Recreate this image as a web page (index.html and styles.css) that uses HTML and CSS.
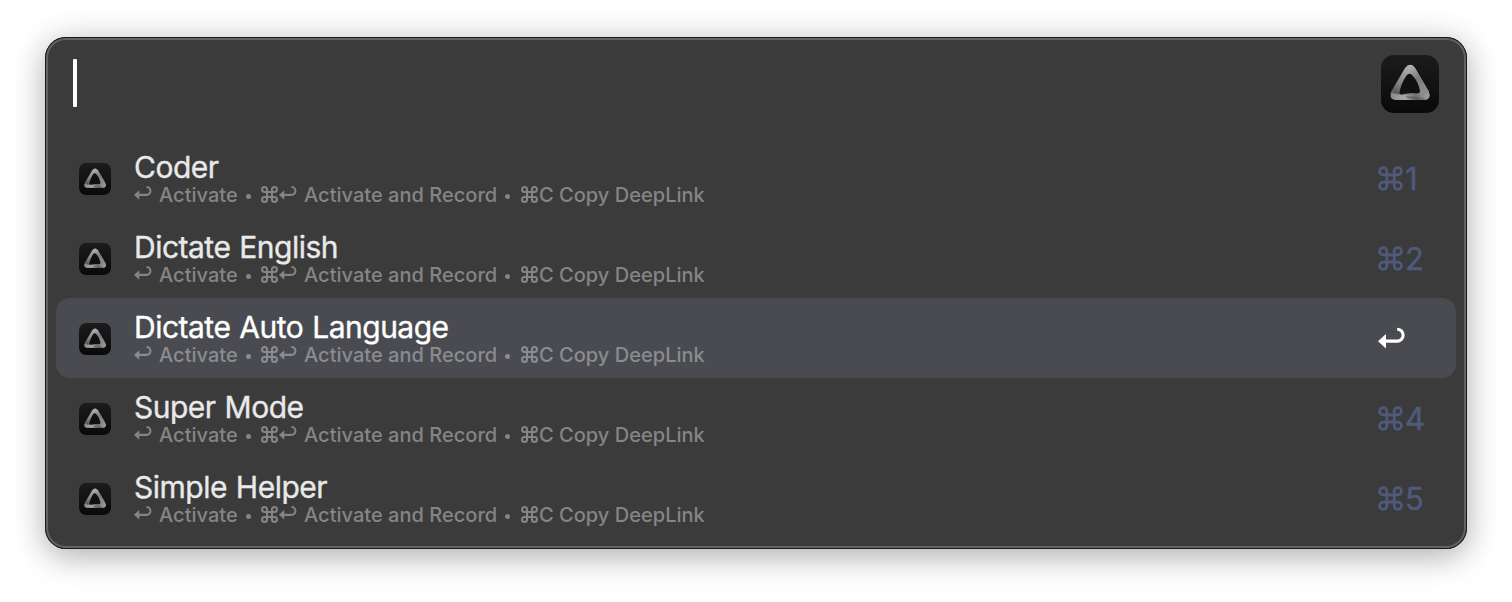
FILE: index.html
```html
<!DOCTYPE html>
<html lang="en">
<head>
<meta charset="utf-8">
<title>Launcher</title>
<link rel="stylesheet" href="styles.css">
</head>
<body>
<svg class="defs" aria-hidden="true">
  <defs>
    <linearGradient id="tile" x1="0" y1="0" x2="0" y2="1"><stop offset="0" stop-color="#1b1b1b"/><stop offset=".5" stop-color="#131313"/><stop offset="1" stop-color="#090909"/></linearGradient>
    <linearGradient id="left" gradientUnits="userSpaceOnUse" x1="29" y1="10" x2="12" y2="44"><stop offset="0" stop-color="#b4b4b4"/><stop offset=".55" stop-color="#848484"/><stop offset=".8" stop-color="#5c5c5c"/><stop offset="1" stop-color="#909090"/></linearGradient>
    <linearGradient id="right" gradientUnits="userSpaceOnUse" x1="29" y1="10" x2="46" y2="44"><stop offset="0" stop-color="#b4b4b4"/><stop offset=".4" stop-color="#7c7c7c"/><stop offset="1" stop-color="#959595"/></linearGradient>
    <linearGradient id="base" gradientUnits="userSpaceOnUse" x1="10" y1="0" x2="48" y2="0"><stop offset="0" stop-color="#8c8c8c"/><stop offset=".35" stop-color="#a8a8a8"/><stop offset=".65" stop-color="#707070"/><stop offset="1" stop-color="#a0a0a0"/></linearGradient>
    <symbol id="logo" viewBox="0 0 58 58">
      <rect width="58" height="58" rx="13" fill="url(#tile)"/>
      <path d="M24 13Q29 6.500 34 13L47.500 36Q51 45 42 45H16Q7 45 10.500 36Z" fill="url(#left)"/>
      <path d="M29 9.800Q32 9.800 34 13L47.500 36Q51 45 42 45L36 39L29 20Z" fill="url(#right)"/>
      <path d="M10 38Q16 40 24 39.500Q34 39 48.500 39Q48 45 42 45H16Q10 45 10 38Z" fill="url(#base)"/>
      <path d="M24 41Q35 41 45 44Q42 45 36 45Q28 44 24 41Z" fill="#555" opacity=".6"/>
      <path d="M25.500 20.500Q28.500 17 31.500 20.500Q37.500 27 39 36Q39 38.500 36 38.500Q28 37 20.500 39.500Q17.500 39.500 19 35Q20.500 28 25.500 20.500Z" fill="#101010"/>
    </symbol>
    <symbol id="cmd" viewBox="0 0 24 24"><path d="M15.500 8.500V5a3.500 3.500 0 1 1 3.500 3.500H5A3.500 3.500 0 1 1 8.500 5v14A3.500 3.500 0 1 1 5 15.500h14A3.500 3.500 0 1 1 15.500 19Z" fill="none" stroke="currentColor"/></symbol>
    <symbol id="ret" viewBox="0 0 28 22"><path d="M7 14.500H18.500A5.750 5.750 0 0 0 18.500 3" fill="none" stroke="currentColor" stroke-width="3"/><path d="M0 14.500 7.700 7.500V21.500Z" fill="currentColor"/></symbol>
  </defs>
</svg>
<main class="panel">
  <header class="search">
    <span class="caret"></span>
    <svg class="app-logo"><use href="#logo"/></svg>
  </header>
  <ul class="results" id="results"></ul>
</main>
<script src="results.js"></script>
</body>
</html>
```

FILE: styles.css
```css
* { box-sizing: border-box; }
body {
  margin: 0;
  width: 1512px;
  height: 602px;
  padding: 37px 45px 53px;
  overflow: hidden;
  background: #fff;
  font-family: Inter, "Liberation Sans", sans-serif;
}
.defs { position: absolute; width: 0; height: 0; }
.panel {
  height: 512px;
  padding: 1px 11px;
  border-radius: 21px;
  background: #3b3b3b;
  box-shadow: inset 0 0 0 1px #191919, inset 0 0 0 3px #636363, 0 8px 32px rgba(0, 0, 0, .28), 0 0 36px rgba(0, 0, 0, .07);
}
.search {
  display: flex;
  justify-content: space-between;
  height: 100px;
  padding: 17px 17px 0;
}
.caret { width: 4px; height: 48px; margin-top: 4px; border-radius: 1px; background: #fff; }
.app-logo { width: 58px; height: 58px; }
.results { margin: 0; padding: 0; list-style: none; }
.row {
  display: flex;
  align-items: center;
  height: 80px;
  padding: 0 32px 0 23px;
  border-radius: 14px;
  color: #e9e9e9;
}
.row.selected { background: #494b50; color: #fff; }
.row-logo { width: 32px; height: 32px; margin-top: 2px; }
.copy { flex: 1; margin-left: 23px; }
.title {
  height: 32px;
  padding-top: 1px;
  font-size: 30px;
  line-height: 32px;
  letter-spacing: -.5px;
  word-spacing: 1px;
  -webkit-text-stroke: .35px currentColor;
  white-space: nowrap;
}
.subtitle {
  display: grid;
  grid-template-columns: 25px 87px 14px 19px 25px 201px 15px 39px 150px;
  align-items: center;
  height: 24px;
  padding-top: 2px;
  color: #858585;
  font-size: 20px;
  line-height: 22px;
  font-weight: 500;
  white-space: nowrap;
}
.selected .subtitle { color: #8b8c8f; }
.hint { letter-spacing: .03px; }
.dot { width: 5px; height: 5px; margin-top: 3px; border-radius: 50%; background: currentColor; }
.key { display: flex; align-items: center; gap: 2px; }
.subtitle .cmd { width: 17px; height: 17px; margin: -1px 0 0 1px; stroke-width: 2.9; }
.key .cmd { margin-right: -1px; }
.subtitle .key .cmd { margin-right: -1px; }
.subtitle .ret { width: 19px; height: 15px; margin: -6px 0 0 0; }
.shortcut {
  display: flex;
  align-items: center;
  gap: 2px;
  width: 46px;
  height: 36px;
  margin-top: 2px;
  color: #4f5a7b;
  font-size: 31px;
  line-height: 36px;
  -webkit-text-stroke: .5px currentColor;
}
.shortcut .cmd { flex: none; width: 25px; height: 25px; margin-top: -2px; stroke-width: 2.6; }
.selected .shortcut { color: #fff; }
.shortcut .ret { width: 29px; height: 23px; margin: -3px 0 0 0; }
```

FILE: results.js
```js
const modes = ["Coder", "Dictate English", "Dictate Auto Language", "Super Mode", "Simple Helper"];
const icon = name => `<svg class="${name}"><use href="#${name}"/></svg>`;

document.getElementById("results").innerHTML = modes.map((name, i) => {
  const selected = i === 2;
  return `<li class="row${selected ? " selected" : ""}">
    <svg class="row-logo"><use href="#logo"/></svg>
    <div class="copy">
      <div class="title"><span>${name}</span></div>
      <div class="subtitle">${icon("ret")}<span class="hint">Activate</span><i class="dot"></i>${icon("cmd")}${icon("ret")}<span class="hint">Activate and Record</span><i class="dot"></i><span class="key">${icon("cmd")}C</span><span class="hint">Copy DeepLink</span></div>
    </div>
    <div class="shortcut">${selected ? icon("ret") : `${icon("cmd")}<span>${i + 1}</span>`}</div>
  </li>`;
}).join("");
```
